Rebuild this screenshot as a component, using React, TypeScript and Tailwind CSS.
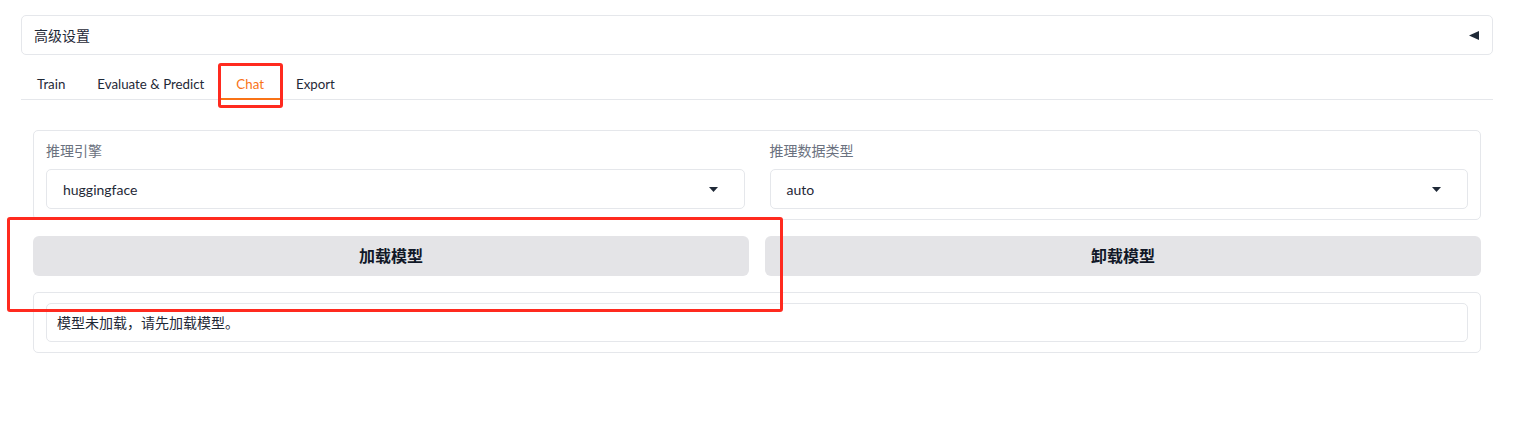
import { useState } from 'react';

const tabs = ['Train', 'Evaluate & Predict', 'Chat', 'Export'];

const latin = "font-['Lato','Noto_Sans_CJK_SC',sans-serif]";

function Caret() {
  return (
    <svg width="9" height="5" viewBox="0 0 9 5" className="shrink-0">
      <polygon points="0,0 9,0 4.5,5" fill="#1f2937" />
    </svg>
  );
}

function Dropdown({ label, value }: { label: string; value: string }) {
  return (
    <div className="flex flex-col">
      <span className="text-[14px] leading-[20px] text-[#6b7280]">{label}</span>
      <div className="mt-[8px] flex h-[40px] items-center justify-between rounded-[5px] border border-[#e5e7eb] bg-white pl-[16px] pr-[26px]">
        <span className="text-[14px] text-[#1f2937]">{value}</span>
        <Caret />
      </div>
    </div>
  );
}

export default function App() {
  const [active, setActive] = useState('Chat');

  return (
    <div className={`relative h-[425px] w-[1540px] bg-white pt-[15px] ${latin}`}>
      <div className="ml-[21px] w-[1472px]">
        {/* accordion header */}
        <div className="flex h-[40px] items-center justify-between rounded-[5px] border border-[#e5e7eb] bg-white pl-[12px] pr-[13px]">
          <span className="text-[14px] text-[#1f2937]">高级设置</span>
          <svg width="10" height="9" viewBox="0 0 10 9">
            <polygon points="10,0 10,9 0,4.5" fill="#1f2937" />
          </svg>
        </div>

        {/* tabs */}
        <div className="mt-[12px] flex h-[33px] border-b border-[#e5e7eb]">
          {tabs.map((t) => (
            <button
              key={t}
              onClick={() => setActive(t)}
              className={`-mb-px flex h-[33px] items-center px-[16px] pt-[4px] text-[13.3px] ${
                active === t
                  ? 'border-b-2 border-[#f97316] text-[#f97316]'
                  : 'border-b-2 border-transparent text-[#1f2937]'
              }`}
            >
              {t}
            </button>
          ))}
        </div>

        {/* chat tab content */}
        <div className="px-[12px] pt-[30px]">
          <div className="grid h-[90px] grid-cols-2 gap-[25px] rounded-[5px] border border-[#e5e7eb] px-[12px] pt-[10px]">
            <Dropdown label="推理引擎" value="huggingface" />
            <Dropdown label="推理数据类型" value="auto" />
          </div>

          <div className="mt-[16px] grid grid-cols-2 gap-[16px]">
            <button className="flex h-[40px] items-center justify-center rounded-[6px] bg-[#e4e4e7] text-[16px] font-bold text-[#111827]">
              加载模型
            </button>
            <button className="flex h-[40px] items-center justify-center rounded-[6px] bg-[#e4e4e7] text-[16px] font-bold text-[#111827]">
              卸载模型
            </button>
          </div>

          <div className="mt-[16px] h-[61px] rounded-[5px] border border-[#e5e7eb] px-[12px] pt-[10px]">
            <div className="flex h-[39px] items-center rounded-[5px] border border-[#e5e7eb] px-[10px]">
              <span className="text-[14px] text-[#1f2937]">模型未加载，请先加载模型。</span>
            </div>
          </div>
        </div>
      </div>

      {/* red annotation boxes */}
      <div className="pointer-events-none absolute left-[218px] top-[63px] h-[45px] w-[65px] rounded-[3px] border-[3px] border-[#ff2a1f]" />
      <div className="pointer-events-none absolute left-[7px] top-[217px] h-[95px] w-[776px] rounded-[3px] border-[3px] border-[#ff2a1f]" />
    </div>
  );
}
